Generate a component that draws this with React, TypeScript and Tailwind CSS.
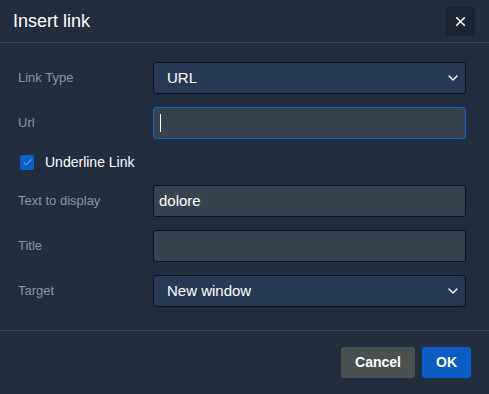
import { Check, ChevronDown, X } from "lucide-react";

/* ── Form rows ──────────────────────────────────────────────── */
function Label({ children }: { children: React.ReactNode }) {
  return <span className="text-[13px] text-[#8d96a1]">{children}</span>;
}

function SelectBox({ value }: { value: string }) {
  return (
    <div className="flex h-[32px] items-center justify-between rounded-[3px] border border-[#0d121a] bg-[#283a52] pl-[13px] pr-[4px]">
      <span className="text-[15px] text-white">{value}</span>
      <ChevronDown className="h-4 w-4 text-white" strokeWidth={2} />
    </div>
  );
}

function TextBox({ value, focused }: { value?: string; focused?: boolean }) {
  return (
    <div
      className={`flex h-[32px] items-center rounded-[3px] border bg-[#37424f] px-[5px] ${
        focused ? "border-[#1463c8]" : "border-[#0d121a]"
      }`}
    >
      {focused && <span className="ml-px h-[18px] w-px bg-white" />}
      {value && <span className="text-[15px] text-white">{value}</span>}
    </div>
  );
}

/* ── Page ───────────────────────────────────────────────────── */
export default function App() {
  return (
    <div
      className="flex h-[394px] w-[489px] flex-col bg-[#222d3d] text-white"
      style={{ fontFamily: "'Liberation Sans', Arial, sans-serif" }}
    >
      {/* Header */}
      <div className="flex h-[43px] items-center justify-between border-b border-[#394656] pl-[13px] pr-[14px]">
        <h1 className="text-[18px] leading-none">Insert link</h1>
        <button className="flex h-[29px] w-[29px] items-center justify-center rounded-[3px] bg-[#1a2432]">
          <X className="h-[15px] w-[15px] text-white" strokeWidth={2.6} />
        </button>
      </div>

      {/* Body */}
      <div className="flex flex-1 flex-col gap-[13px] pl-[18px] pr-[23px] pt-[19px]">
        <div className="grid grid-cols-[135px_1fr] items-center">
          <Label>Link Type</Label>
          <SelectBox value="URL" />
        </div>
        <div className="grid grid-cols-[135px_1fr] items-center">
          <Label>Url</Label>
          <TextBox focused />
        </div>
        <div className="flex h-[20px] items-center gap-[11px] pl-[2px]">
          <span className="flex h-[15px] w-[14px] items-center justify-center rounded-[2px] bg-[#0e5ec7]">
            <Check className="h-[11px] w-[11px] text-[#9cbde8]" strokeWidth={2} />
          </span>
          <span className="text-[14px] text-white">Underline Link</span>
        </div>
        <div className="grid grid-cols-[135px_1fr] items-center">
          <Label>Text to display</Label>
          <TextBox value="dolore" />
        </div>
        <div className="grid grid-cols-[135px_1fr] items-center">
          <Label>Title</Label>
          <TextBox />
        </div>
        <div className="grid grid-cols-[135px_1fr] items-center">
          <Label>Target</Label>
          <SelectBox value="New window" />
        </div>
      </div>

      {/* Footer */}
      <div className="flex items-center justify-end gap-[7px] border-t border-[#394656] pb-[16px] pl-4 pr-[18px] pt-[16px]">
        <button className="h-[31px] w-[74px] rounded-[3px] bg-[#4a5151] text-[14px] font-bold text-white">
          Cancel
        </button>
        <button className="h-[31px] w-[49px] rounded-[3px] bg-[#0b5cc4] text-[14px] font-bold text-white">
          OK
        </button>
      </div>
    </div>
  );
}
